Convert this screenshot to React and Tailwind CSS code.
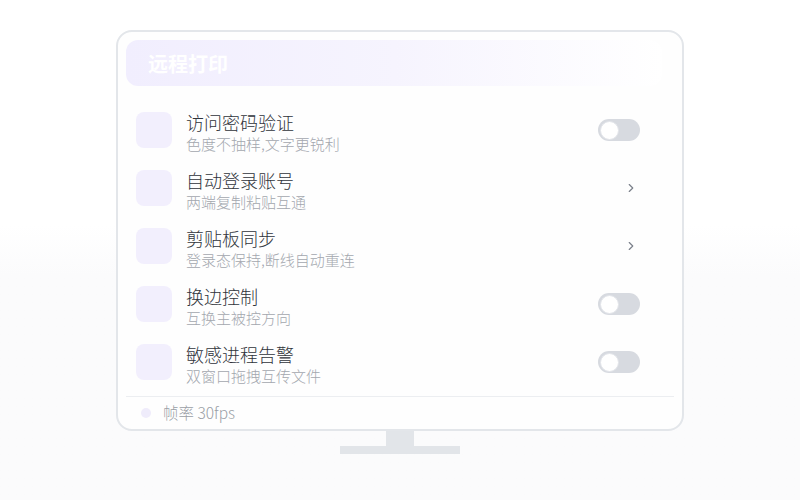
import { ChevronRight } from "lucide-react";

const rows = [
  { title: "访问密码验证", sub: "色度不抽样,文字更锐利", kind: "toggle" },
  { title: "自动登录账号", sub: "两端复制粘贴互通", kind: "arrow" },
  { title: "剪贴板同步", sub: "登录态保持,断线自动重连", kind: "arrow" },
  { title: "换边控制", sub: "互换主被控方向", kind: "toggle" },
  { title: "敏感进程告警", sub: "双窗口拖拽互传文件", kind: "toggle" },
];

const Toggle = () => (
  <div className="w-[42px] h-[22px] rounded-full bg-[#d7dae0] p-[2px] flex items-center">
    <div className="w-[19px] h-[19px] rounded-full bg-white border border-[#e3e5ea]" />
  </div>
);

const Row = ({ row }) => (
  <div className="h-[58px] flex items-center pl-[10px] pr-[34px]">
    <div className="w-[36px] h-[36px] rounded-lg bg-[#f2effd] shrink-0" />
    <div className="flex-1 ml-[14px] mt-[4px] flex flex-col">
      <span className="text-[18px] leading-[24px] font-light text-[#30343b]">{row.title}</span>
      <span className="text-[15px] leading-[20px] font-light text-[#a3a7ae]">{row.sub}</span>
    </div>
    {row.kind === "toggle" ? (
      <Toggle />
    ) : (
      <ChevronRight className="w-[14px] h-[14px] text-[#7b808a] mr-[2px]" strokeWidth={2} />
    )}
  </div>
);

export default function App() {
  return (
    <div
      className="w-[800px] h-[500px] bg-gradient-to-b from-white from-45% to-[#fbfbfc] to-55% flex flex-col items-center pt-[30px]"
      style={{ fontFamily: '"Noto Sans CJK SC", "Noto Sans", sans-serif' }}
    >
      <div className="w-[568px] h-[401px] border-2 border-[#e3e6ea] rounded-2xl bg-[#fefefe] pt-[8px] px-[8px] flex flex-col">
        <div className="h-[46px] rounded-xl bg-gradient-to-r from-[#f1eefe] via-[#f6f4fe] to-white flex items-center pl-[22px] mr-[12px]">
          <span className="text-[20px] font-bold text-white mt-[2px]">远程打印</span>
        </div>
        <div className="mt-[15px] flex flex-col">
          {rows.map((r) => (
            <Row key={r.title} row={r} />
          ))}
        </div>
        <div className="mt-[5px] border-t border-[#eceef1] flex-1 flex items-center pl-[15px]">
          <div className="w-[10px] h-[10px] rounded-full bg-[#efecfb]" />
          <span className="ml-[12px] text-[15.5px] font-light text-[#9a9ea6]">帧率 30fps</span>
        </div>
      </div>
      <div className="w-[28px] h-[15px] bg-[#e2e5e9]" />
      <div className="w-[120px] h-[8px] bg-[#e2e5e9]" />
    </div>
  );
}
